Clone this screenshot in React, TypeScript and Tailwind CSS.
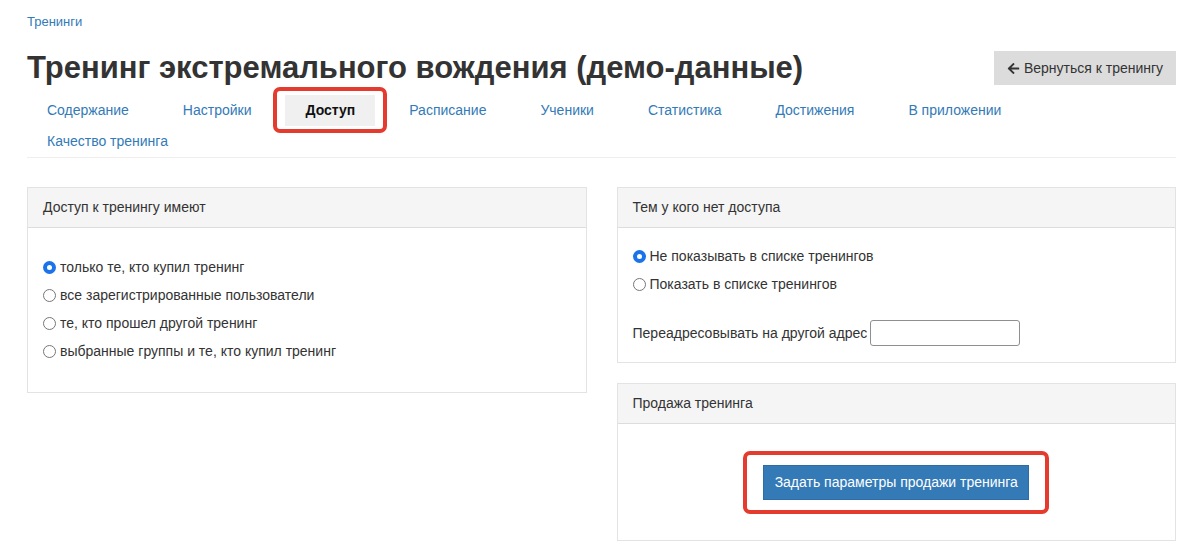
import { FaArrowLeft } from "react-icons/fa";

const tabs = [
  "Содержание",
  "Настройки",
  "Доступ",
  "Расписание",
  "Ученики",
  "Статистика",
  "Достижения",
  "В приложении",
  "Качество тренинга",
];

function Radio({ checked }: { checked?: boolean }) {
  if (checked) {
    return (
      <span className="mr-[4px] flex h-[13px] w-[13px] shrink-0 items-center justify-center rounded-full bg-[#1a73e8]">
        <span className="h-[5px] w-[5px] rounded-full bg-white" />
      </span>
    );
  }
  return <span className="mr-[4px] h-[13px] w-[13px] shrink-0 rounded-full border border-[#767676] bg-white" />;
}

function Panel({ title, children }: { title: string; children: React.ReactNode }) {
  return (
    <div className="border border-[#e3e3e3] bg-white">
      <div className="flex h-[40px] items-center border-b border-[#dddddd] bg-[#f5f5f5] px-[15px] text-[14px] text-[#333]">
        {title}
      </div>
      {children}
    </div>
  );
}

export default function App() {
  return (
    <div className="min-h-[557px] bg-white pl-[27px] pr-[24px] pt-[11px] font-['Liberation_Sans',Arial,sans-serif] text-[14px] text-[#333]">
      {/* breadcrumb */}
      <a className="text-[13px] leading-[18px] text-[#337ab7]">Тренинги</a>

      {/* title row */}
      <div className="mt-[16px] flex items-center justify-between">
        <h1 className="text-[31px] font-bold leading-[40px] text-[#333]">
          Тренинг экстремального вождения (демо-данные)
        </h1>
        <button className="flex h-[34px] w-[182px] items-center justify-center gap-[4px] bg-[#dcdcdc] text-[14px] text-[#333]">
          <FaArrowLeft className="h-[13px] w-[13px]" />
          Вернуться к тренингу
        </button>
      </div>

      {/* tabs */}
      <ul className="mt-[7px] flex flex-wrap border-b border-[#eeeeee]">
        {tabs.map((tab) => {
          const active = tab === "Доступ";
          return (
            <li key={tab} className="relative mr-[14px]">
              {active && (
                <span className="pointer-events-none absolute -bottom-[7px] -left-[12px] -right-[12px] -top-[8px] rounded-[7px] border-[4px] border-[#e53b2f]" />
              )}
              <a
                className={
                  active
                    ? "block h-[31px] bg-[#f0f0f0] px-[20px] text-[14px] font-bold leading-[31px] text-[#111]"
                    : "block h-[31px] px-[20px] text-[14px] leading-[31px] text-[#337ab7]"
                }
              >
                {tab}
              </a>
            </li>
          );
        })}
      </ul>

      {/* panels */}
      <div className="mt-[29px] grid grid-cols-2 gap-[30px]">
        <div>
          <Panel title="Доступ к тренингу имеют">
            <div className="flex flex-col gap-[8px] px-[15px] pb-[31px] pt-[29px]">
              <label className="flex h-[20px] items-center">
                <Radio checked />
                только те, кто купил тренинг
              </label>
              <label className="flex h-[20px] items-center">
                <Radio />
                все зарегистрированные пользователи
              </label>
              <label className="flex h-[20px] items-center">
                <Radio />
                те, кто прошел другой тренинг
              </label>
              <label className="flex h-[20px] items-center">
                <Radio />
                выбранные группы и те, кто купил тренинг
              </label>
            </div>
          </Panel>
        </div>

        <div className="flex flex-col gap-[20px]">
          <Panel title="Тем у кого нет доступа">
            <div className="px-[15px] pb-[16px] pt-[18px]">
              <div className="flex flex-col gap-[8px]">
                <label className="flex h-[20px] items-center">
                  <Radio checked />
                  Не показывать в списке тренингов
                </label>
                <label className="flex h-[20px] items-center">
                  <Radio />
                  Показать в списке тренингов
                </label>
              </div>
              <div className="mt-[26px] flex items-center">
                <span className="mr-[3px]">Переадресовывать на другой адрес</span>
                <input className="h-[26px] w-[150px] rounded-[3px] border border-[#8f8f8f] bg-white px-[4px] outline-none" />
              </div>
            </div>
          </Panel>

          <Panel title="Продажа тренинга">
            <div className="flex justify-center pb-[26px] pt-[27px]">
              <div className="rounded-[7px] border-[4px] border-[#e53b2f] px-[16px] py-[10px]">
                <button className="h-[35px] w-[266px] border border-[#2e6da4] bg-[#337ab7] text-[14px] text-white">
                  Задать параметры продажи тренинга
                </button>
              </div>
            </div>
          </Panel>
        </div>
      </div>
    </div>
  );
}
